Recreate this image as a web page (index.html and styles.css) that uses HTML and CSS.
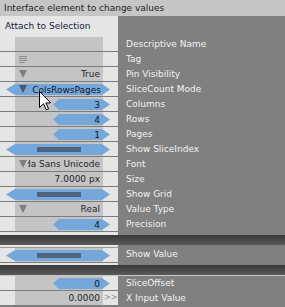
FILE: index.html
```html
<!DOCTYPE html>
<html>
<head>
<meta charset="utf-8">
<link rel="stylesheet" href="styles.css">
</head>
<body>
<div class="panel">
  <div class="title">Interface element to change values</div>
  <div class="head"><div class="hcell">Attach to Selection</div><div></div></div>

  <div class="row"><div class="cell"></div><div class="label">Descriptive Name</div></div>
  <div class="row"><div class="cell"><svg class="tagicon" width="8" height="7" viewBox="0 0 8 7"><path d="M0 0.5H8M0 2.5H8M0 4.5H8M0 6.5H6" stroke="#8c8c8c" stroke-width="1"/></svg></div><div class="label">Tag</div></div>
  <div class="row"><div class="cell"><span class="tri"></span><span class="val">True</span></div><div class="label">Pin Visibility</div></div>
  <div class="row"><div class="cell"><div class="blue wide enum"><span class="tri dark"></span><span class="etext">ColsRowsPages</span></div></div><div class="label">SliceCount Mode</div></div>
  <div class="row"><div class="cell"><div class="blue num">3</div></div><div class="label">Columns</div></div>
  <div class="row"><div class="cell"><div class="blue num">4</div></div><div class="label">Rows</div></div>
  <div class="row"><div class="cell"><div class="blue num">1</div></div><div class="label">Pages</div></div>
  <div class="row"><div class="cell"><div class="blue wide toggle"><span class="bar"></span></div></div><div class="label">Show SliceIndex</div></div>
  <div class="row"><div class="cell"><span class="tri"></span><span class="val clip"><span>Lucida Sans Unicode</span></span></div><div class="label">Font</div></div>
  <div class="row"><div class="cell"><span class="val">7.0000 px</span></div><div class="label">Size</div></div>
  <div class="row"><div class="cell"><div class="blue wide toggle"><span class="bar"></span></div></div><div class="label">Show Grid</div></div>
  <div class="row"><div class="cell"><span class="tri"></span><span class="val">Real</span></div><div class="label">Value Type</div></div>
  <div class="row"><div class="cell"><div class="blue num">4</div></div><div class="label">Precision</div></div>

  <div class="spacer"><div class="scell"></div><div></div></div>
  <div class="band"></div>
  <div class="spacer small"><div class="scell"></div><div></div></div>
  <div class="row topline"><div class="cell"><div class="blue wide toggle"><span class="bar"></span></div></div><div class="label">Show Value</div></div>
  <div class="spacer small"><div class="scell"></div><div></div></div>
  <div class="band"></div>
  <div class="hiline"></div>
  <div class="row"><div class="cell"><div class="blue num">0</div></div><div class="label">SliceOffset</div></div>
  <div class="row"><div class="cell"><span class="val">0.0000</span><span class="more">&gt;&gt;</span></div><div class="label">X Input Value</div></div>

  <svg class="cursor" width="13" height="20" viewBox="0 0 13 20"><path d="M0.5 0.5V16.5L4.5 12.7L7.3 18.8L9.6 17.8L6.9 11.9H11.8Z" fill="#ffffff" stroke="#000000" stroke-width="1" stroke-linejoin="miter"/></svg>
</div>
</body>
</html>
```
FILE: styles.css
```css
html, body {
  margin: 0;
  padding: 0;
  background: #808080;
}
.panel {
  position: relative;
  width: 285px;
  height: 307px;
  overflow: hidden;
  background: #808080;
  font-family: "DejaVu Sans", Verdana, sans-serif;
  font-size: 9px;
}
.title {
  height: 16px;
  line-height: 16px;
  background: #c6c6c6;
  color: #1e1e28;
  padding-left: 4px;
  white-space: nowrap;
}
.head {
  display: grid;
  grid-template-columns: 118px 1fr;
  height: 21px;
}
.hcell {
  background: #e6e6e6;
  color: #1a1a3c;
  padding-left: 5px;
  line-height: 21px;
  white-space: nowrap;
}
.row {
  display: grid;
  grid-template-columns: 118px 1fr;
  height: 15px;
}
.cell {
  position: relative;
  display: flex;
  align-items: center;
  height: 14px;
  border-bottom: 1px solid #7c7c7c;
  background: linear-gradient(to right, #e6e6e6 15px, #c4c4c4 15px, #c4c4c4 103px, #e6e6e6 103px);
  color: #1e1e2a;
}
.row.topline .cell {
  border-top: 1px solid #9a9a9a;
  height: 14px;
}
.row.topline { height: 16px; }
.label {
  color: #f2f2f2;
  padding-left: 8px;
  line-height: 15px;
  white-space: nowrap;
}
.tagicon {
  margin-left: 19px;
  margin-top: 1px;
}
.tri {
  position: absolute;
  left: 19px;
  top: 3px;
  width: 0;
  height: 0;
  border-left: 4px solid transparent;
  border-right: 4px solid transparent;
  border-top: 8px solid #808080;
}
.tri.dark {
  border-top-color: #4c5866;
  left: 13px;
  top: 1px;
}
.val {
  position: absolute;
  right: 18px;
  top: 0;
  line-height: 14px;
  white-space: nowrap;
}
.val.clip {
  left: 28px;
  display: flex;
  justify-content: flex-end;
  overflow: hidden;
}
.val.clip span { flex: none; }
.more {
  position: absolute;
  left: 104px;
  top: 0;
  line-height: 14px;
  color: #8a8a8a;
  font-size: 8px;
}
.blue {
  position: absolute;
  top: 2px;
  height: 11px;
  background: #75a7da;
  color: #14141e;
}
.blue.wide {
  left: 6px;
  width: 104px;
  clip-path: polygon(0 50%, 9px 0, calc(100% - 8px) 0, 100% 50%, calc(100% - 8px) 100%, 9px 100%);
}
.blue.num {
  left: 53px;
  width: 57px;
  clip-path: polygon(0 50%, 6px 0, calc(100% - 8px) 0, 100% 50%, calc(100% - 8px) 100%, 6px 100%);
  text-align: right;
  padding-right: 10px;
  box-sizing: border-box;
  line-height: 12px;
}
.enum .etext {
  position: absolute;
  right: 9px;
  top: 0;
  line-height: 12px;
}
.toggle .bar {
  position: absolute;
  left: 31px;
  top: 3px;
  width: 44px;
  height: 5px;
  background: #4c6582;
}
.spacer {
  display: grid;
  grid-template-columns: 118px 1fr;
  height: 3px;
}
.spacer.small { height: 2px; }
.scell { background: #e6e6e6; }
.band {
  height: 10px;
  background: linear-gradient(to bottom, #383838, #5a5a5a);
}
.hiline {
  height: 1px;
  background: #c8c8c8;
}
.cursor {
  position: absolute;
  left: 39px;
  top: 91px;
}
```
